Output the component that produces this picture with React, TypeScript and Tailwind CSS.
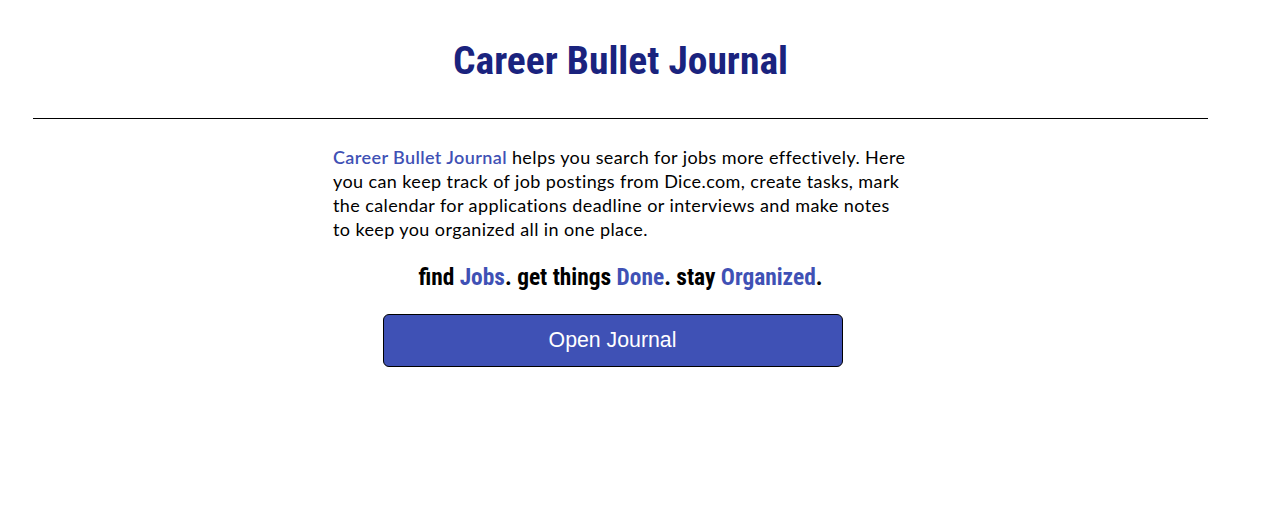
export default function App() {
  const cond = { fontFamily: '"Roboto Condensed", Roboto, sans-serif' };
  return (
    <div className="w-[1241px] bg-white">
      <div className="pt-[38px] pb-[34px] text-center">
        <h1 style={cond} className="text-[39.5px] leading-[46px] font-bold text-[#1a237e]">
          Career Bullet Journal
        </h1>
      </div>
      <div className="mx-[33px] h-px bg-black" />
      <div className="flex flex-col items-center">
        <p className="mt-[26px] w-[575px] whitespace-nowrap font-['Lato',sans-serif] text-[18px] leading-[24px] tracking-[0.4px] text-black">
          <span className="font-semibold text-[#3f51b5]">Career Bullet Journal</span> helps you search for jobs more effectively. Here
          <br />
          you can keep track of job postings from Dice.com, create tasks, mark
          <br />
          the calendar for applications deadline or interviews and make notes
          <br />
          to keep you organized all in one place.
        </p>
        <p style={cond} className="mt-[23px] text-[23.4px] leading-[26px] font-bold text-black">
          find <span className="text-[#3f51b5]">Jobs</span>. get things <span className="text-[#3f51b5]">Done</span>. stay <span className="text-[#3f51b5]">Organized</span>.
        </p>
        <button className="mt-[24px] mr-[16px] h-[53px] w-[460px] rounded-[6px] border border-black bg-[#3f51b5] font-['Liberation_Sans',Arial,sans-serif] text-[21.3px] text-white">
          Open Journal
        </button>
      </div>
    </div>
  );
}
